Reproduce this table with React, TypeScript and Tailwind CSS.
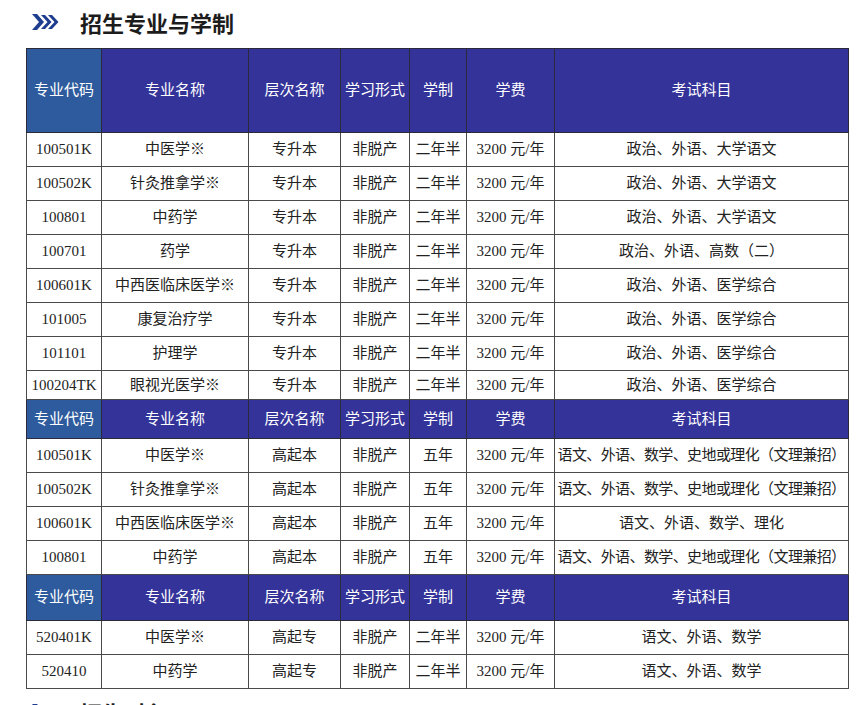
import React from "react";

type Row = [string, string, string, string, string, string, string];

const HEAD: Row = ["专业代码", "专业名称", "层次名称", "学习形式", "学制", "学费", "考试科目"];

const UPGRADE: Row[] = [
  ["100501K", "中医学※", "专升本", "非脱产", "二年半", "3200 元/年", "政治、外语、大学语文"],
  ["100502K", "针灸推拿学※", "专升本", "非脱产", "二年半", "3200 元/年", "政治、外语、大学语文"],
  ["100801", "中药学", "专升本", "非脱产", "二年半", "3200 元/年", "政治、外语、大学语文"],
  ["100701", "药学", "专升本", "非脱产", "二年半", "3200 元/年", "政治、外语、高数（二）"],
  ["100601K", "中西医临床医学※", "专升本", "非脱产", "二年半", "3200 元/年", "政治、外语、医学综合"],
  ["101005", "康复治疗学", "专升本", "非脱产", "二年半", "3200 元/年", "政治、外语、医学综合"],
  ["101101", "护理学", "专升本", "非脱产", "二年半", "3200 元/年", "政治、外语、医学综合"],
  ["100204TK", "眼视光医学※", "专升本", "非脱产", "二年半", "3200 元/年", "政治、外语、医学综合"],
];

const HIGH_BACHELOR: Row[] = [
  ["100501K", "中医学※", "高起本", "非脱产", "五年", "3200 元/年", "语文、外语、数学、史地或理化（文理兼招）"],
  ["100502K", "针灸推拿学※", "高起本", "非脱产", "五年", "3200 元/年", "语文、外语、数学、史地或理化（文理兼招）"],
  ["100601K", "中西医临床医学※", "高起本", "非脱产", "五年", "3200 元/年", "语文、外语、数学、理化"],
  ["100801", "中药学", "高起本", "非脱产", "五年", "3200 元/年", "语文、外语、数学、史地或理化（文理兼招）"],
];

const HIGH_COLLEGE: Row[] = [
  ["520401K", "中医学※", "高起专", "非脱产", "二年半", "3200 元/年", "语文、外语、数学"],
  ["520410", "中药学", "高起专", "非脱产", "二年半", "3200 元/年", "语文、外语、数学"],
];

const WIDTHS = ["w-[75px]", "w-[147px]", "w-[92px]", "w-[69px]", "w-[57px]", "w-[88px]", "w-[294px]"];

function Chevrons() {
  return (
    <svg width="28" height="18" viewBox="0 0 28 18" className="shrink-0">
      <g fill="#1f3d8f">
        <polygon points="0,1 5,1 12,9 5,17 0,17 7,9" />
        <polygon points="9,2 13,2 19.5,9 13,16 9,16 15.5,9" />
        <polygon points="16,2 20,2 26.5,9 20,16 16,16 22.5,9" />
      </g>
    </svg>
  );
}

function Heading({ title }: { title: string }) {
  return (
    <div className="flex h-[30px] items-center gap-[20px] pl-[32px]">
      <Chevrons />
      <h2 className="text-[22px] font-bold leading-[30px] text-[#1c1c1c]">{title}</h2>
    </div>
  );
}

function HeaderRow({ height }: { height: string }) {
  return (
    <tr className={height}>
      {HEAD.map((h, i) => (
        <th
          key={h}
          className={
            "border border-[#2a2a3a] px-0 text-[15px] font-normal text-white " +
            (i === 0 ? "bg-[#2e5b9d]" : "bg-[#343399]")
          }
        >
          {h}
        </th>
      ))}
    </tr>
  );
}

function DataRow({ row, height }: { row: Row; height: string }) {
  return (
    <tr className={height}>
      {row.map((cell, i) => {
        const long = cell.length > 14;
        return (
          <td
            key={i}
            className={
              "whitespace-nowrap border border-[#4a4a4a] p-0 text-center text-[15px] text-[#222] " +
              (i === 6 ? "border-l-[#b5b5b5] " : "") +
              (long ? "tracking-[-0.6px]" : "")
            }
          >
            {cell}
          </td>
        );
      })}
    </tr>
  );
}

export default function App() {
  return (
    <div
      className="h-[705px] w-[867px] overflow-hidden bg-white pt-[7px]"
      style={{ fontFamily: '"Liberation Serif", "Noto Sans CJK SC", serif' }}
    >
      <div style={{ fontFamily: '"Noto Sans CJK SC", sans-serif' }}>
        <Heading title="招生专业与学制" />
      </div>

      <table className="ml-[26px] mt-[11px] w-[822px] table-fixed border-collapse">
        <colgroup>
          {WIDTHS.map((w) => (
            <col key={w} className={w} />
          ))}
        </colgroup>
        <tbody>
          <HeaderRow height="h-[84px]" />
          {UPGRADE.map((r, i) => (
            <DataRow key={r[0] + r[2]} row={r} height={i === UPGRADE.length - 1 ? "h-[29px]" : "h-[34px]"} />
          ))}
          <HeaderRow height="h-[39px]" />
          {HIGH_BACHELOR.map((r) => (
            <DataRow key={r[0] + r[2]} row={r} height="h-[34px]" />
          ))}
          <HeaderRow height="h-[46px]" />
          {HIGH_COLLEGE.map((r) => (
            <DataRow key={r[0] + r[2]} row={r} height="h-[34px]" />
          ))}
        </tbody>
      </table>

      <div className="mt-[8px]" style={{ fontFamily: '"Noto Sans CJK SC", sans-serif' }}>
        <Heading title="招生对象" />
      </div>
    </div>
  );
}
